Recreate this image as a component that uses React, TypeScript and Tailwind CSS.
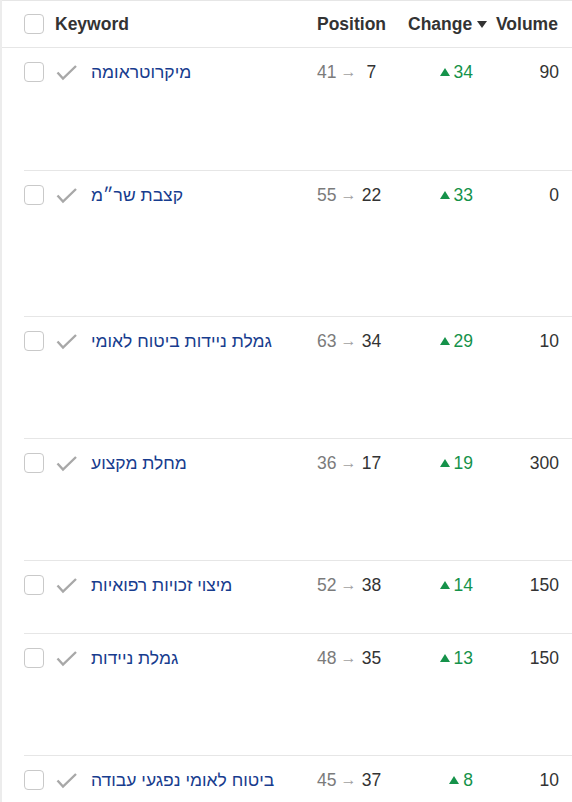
type Row = {
  keyword: string
  from: number
  to: number
  change: number
  volume: number
  height: string
}

const rows: Row[] = [
  { keyword: 'מיקרוטראומה', from: 41, to: 7, change: 34, volume: 90, height: 'h-[122px]' },
  { keyword: 'קצבת שר״מ', from: 55, to: 22, change: 33, volume: 0, height: 'h-[146px]' },
  { keyword: 'גמלת ניידות ביטוח לאומי', from: 63, to: 34, change: 29, volume: 10, height: 'h-[122px]' },
  { keyword: 'מחלת מקצוע', from: 36, to: 17, change: 19, volume: 300, height: 'h-[122px]' },
  { keyword: 'מיצוי זכויות רפואיות', from: 52, to: 38, change: 14, volume: 150, height: 'h-[73px]' },
  { keyword: 'גמלת ניידות', from: 48, to: 35, change: 13, volume: 150, height: 'h-[122px]' },
  { keyword: 'ביטוח לאומי נפגעי עבודה', from: 45, to: 37, change: 8, volume: 10, height: 'h-[122px]' },
]

function Checkbox() {
  return <span className="block h-5 w-5 shrink-0 rounded-[4px] border border-[#c9c9c9] bg-white" />
}

function CheckMark() {
  return (
    <svg width="21" height="17" viewBox="0 0 21 17" className="shrink-0">
      <polyline
        points="1.5,8.5 7,14.5 20,2"
        fill="none"
        stroke="#a8a8a8"
        strokeWidth="2.4"
      />
    </svg>
  )
}

function UpTriangle() {
  return (
    <svg width="10" height="8" viewBox="0 0 10 8" className="mr-[4px] shrink-0">
      <polygon points="5,0 10,8 0,8" fill="#15924a" />
    </svg>
  )
}

export default function App() {
  return (
    <div className="min-h-[802px] w-[572px] overflow-hidden border-l-2 border-[#ececec] bg-white font-['Liberation_Sans',Arial,sans-serif] text-[17.5px] leading-5 text-[#333333]">
      <div className="flex h-[48px] items-center border-y border-[#e6e6e6] pl-[22px] font-bold">
        <Checkbox />
        <span className="ml-[11px] w-[262px]">Keyword</span>
        <span className="w-[91px]">Position</span>
        <span className="flex w-[88px] items-center">
          Change
          <svg width="10" height="7" viewBox="0 0 10 7" className="ml-[5px]">
            <polygon points="0,0 10,0 5,7" fill="#333333" />
          </svg>
        </span>
        <span>Volume</span>
      </div>

      {rows.map((row, i) => (
        <div
          key={row.keyword}
          className={`ml-[22px] ${row.height} ${i > 0 ? 'border-t border-[#e6e6e6]' : ''}`}
        >
          <div className="flex items-center pt-[14px]">
            <Checkbox />
            <span className="ml-[12px]">
              <CheckMark />
            </span>
            <span className="ml-[14px] w-[226px] text-[#173c8e]">
              <span dir="rtl">{row.keyword}</span>
            </span>
            <span className="flex w-[90px] items-center">
              <span className="text-[#7b7b7b]">{row.from}</span>
              <span className="mx-[4px] text-[16px] text-[#a0a0a0]">→</span>
              <span className="w-[22px] text-center">{row.to}</span>
            </span>
            <span className="flex w-[66px] items-center justify-end text-[#15924a]">
              <UpTriangle />
              {row.change}
            </span>
            <span className="w-[86px] text-right">{row.volume}</span>
          </div>
        </div>
      ))}
    </div>
  )
}
